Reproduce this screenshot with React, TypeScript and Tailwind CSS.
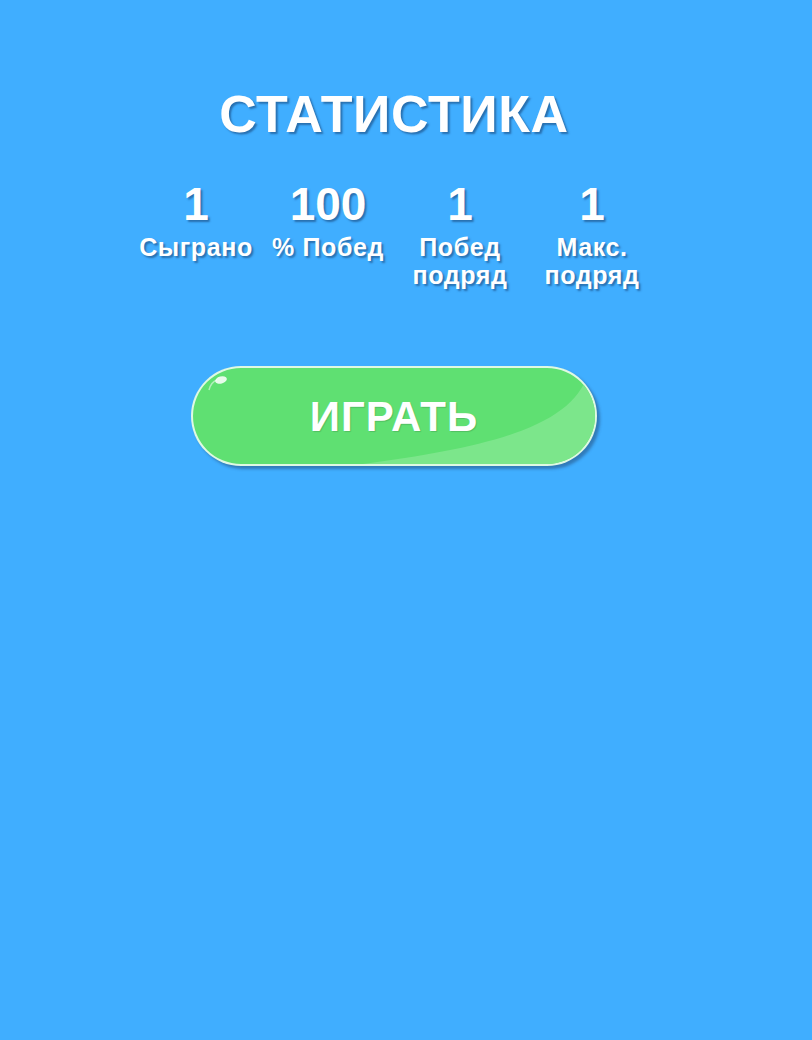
import { Fragment } from "react";

type Stat = {
  value: string;
  label: string[];
};

const stats: Stat[] = [
  { value: "1", label: ["Сыграно"] },
  { value: "100", label: ["% Побед"] },
  { value: "1", label: ["Побед", "подряд"] },
  { value: "1", label: ["Макс.", "подряд"] },
];

const shadow = "[text-shadow:2px_2px_2px_rgba(20,60,110,0.55)]";

export default function App() {
  return (
    <div className="min-h-screen w-full bg-[#40aeff] font-['Liberation_Sans',Arial,sans-serif] text-white">
      <div className="w-[788px] flex flex-col items-center pt-[86px]">
        {/* Title */}
        <h1 className={`text-[52px] leading-[56px] font-bold tracking-[0.6px] ${shadow}`}>СТАТИСТИКА</h1>

        {/* Stats row */}
        <div className="mt-[37px] flex">
          {stats.map((s, i) => (
            <div key={i} className="w-[132px] flex flex-col items-center">
              <div className={`text-[46px] leading-[50px] font-bold ${shadow}`}>{s.value}</div>
              <div className={`mt-[4px] text-[25px] leading-[28px] font-bold tracking-[0.6px] text-center ${shadow}`}>
                {s.label.map((l, j) => (
                  <Fragment key={j}>
                    {l}
                    {j < s.label.length - 1 && <br />}
                  </Fragment>
                ))}
              </div>
            </div>
          ))}
        </div>

        {/* Play button */}
        <button className="relative mt-[77px] w-[406px] h-[100px] rounded-full bg-[#5fe072] border-2 border-white/80 shadow-[3px_3px_3px_rgba(30,60,100,0.45)] overflow-hidden">
          <svg className="absolute inset-0" width="402" height="96" viewBox="0 0 402 96">
            <path d="M170 96 C 290 80, 380 60, 395 5 L 402 0 L 402 96 Z" fill="#7ce68b" />
            <ellipse cx="28" cy="12" rx="6" ry="3.5" fill="white" opacity="0.85" transform="rotate(-15 28 12)" />
            <path d="M16 22 Q 18 14, 24 12" stroke="white" strokeWidth="1.5" fill="none" opacity="0.5" />
          </svg>
          <span className="relative text-[42px] font-bold tracking-[1px] [text-shadow:1px_1px_1px_rgba(0,0,0,0.15)]">ИГРАТЬ</span>
        </button>
      </div>
    </div>
  );
}
